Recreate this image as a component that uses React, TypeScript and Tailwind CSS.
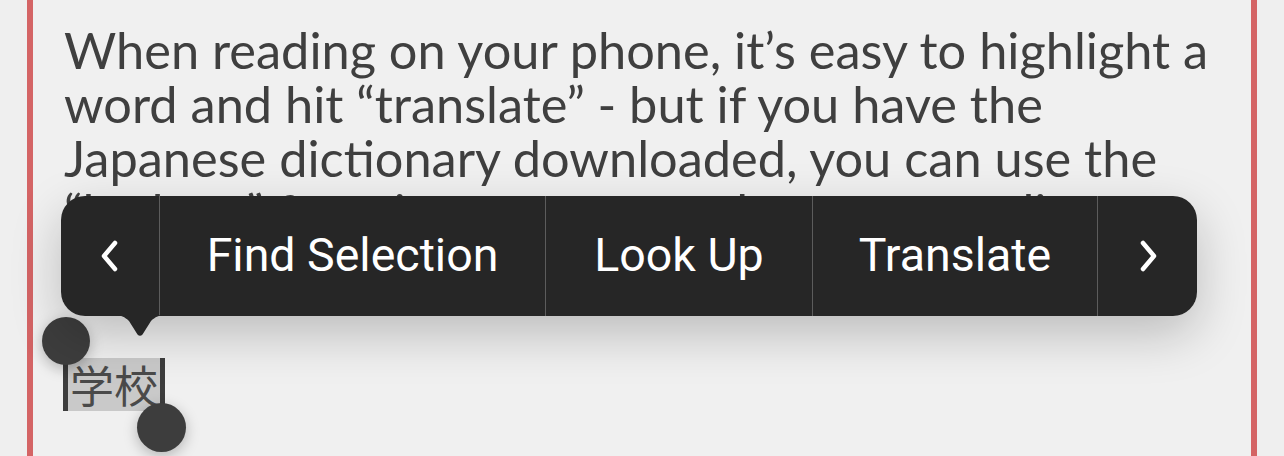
import React from "react";

const items = [
  { label: "Find Selection", width: "w-[386px]" },
  { label: "Look Up", width: "w-[267px]" },
  { label: "Translate", width: "w-[285px]" },
];

const Chevron = ({ dir }: { dir: "left" | "right" }) => (
  <svg width="22" height="34" viewBox="0 0 22 34" fill="none" stroke="white" strokeWidth="4.5" strokeLinecap="round" strokeLinejoin="round">
    {dir === "left" ? <path d="M16 4L5 17l11 13" /> : <path d="M6 4l11 13L6 30" />}
  </svg>
);

export default function App() {
  return (
    <div className="w-[1284px] h-[456px] overflow-hidden bg-[#efefef] pl-[27px]">
      <div className="relative w-[1230px] h-full border-l-[6px] border-r-[6px] border-[#d46465] bg-[#f0f0f0]">
        <div
          className="pl-[31px] pr-[10px] pt-[23px] text-[#3f3f3f] text-[50.5px] leading-[54px] whitespace-nowrap"
          style={{ fontFamily: "Lato, 'Noto Sans', sans-serif" }}
        >
          <p>
            When reading on your phone, it’s easy to highlight a<br />
            word and hit “translate” - but if you have the<br />
            Japanese dictionary downloaded, you can use the<br />
            “look up” function on any word you are reading.
          </p>
        </div>

        {/* selected word */}
        <div className="absolute left-[30px] top-[358px] flex items-start">
          <div className="w-[5px] h-[53px] bg-[#3d3d3d]" />
          <div
            className="bg-[#c9c9c9] px-[2px] text-[44px] leading-[53px] h-[53px] text-[#4a4a4a]"
            style={{ fontFamily: "'Noto Sans CJK JP', sans-serif" }}
          >
            学校
          </div>
          <div className="w-[5px] h-[47px] bg-[#3d3d3d]" />
        </div>
        <div className="absolute left-[9px] top-[317px] w-[48px] h-[48px] rounded-full bg-[#3d3d3d] shadow-[0_4px_14px_rgba(0,0,0,0.25)]" />
        <div className="absolute left-[104px] top-[403px] w-[49px] h-[49px] rounded-full bg-[#3d3d3d] shadow-[0_4px_14px_rgba(0,0,0,0.25)]" />

        {/* edit menu */}
        <div className="absolute left-[28px] top-[196px] shadow-[0_18px_50px_rgba(0,0,0,0.22)] rounded-[24px]">
          <div
            className="flex h-[120px] bg-[#262626] rounded-[24px] text-white text-[46.5px]"
            style={{ fontFamily: "Roboto, Inter, sans-serif" }}
          >
            <div className="w-[99px] flex items-center justify-center border-r border-[#5c5c5c]">
              <Chevron dir="left" />
            </div>
            {items.map((it) => (
              <div key={it.label} className={`${it.width} flex items-center justify-center border-r border-[#5c5c5c]`}>
                {it.label}
              </div>
            ))}
            <div className="w-[99px] flex items-center justify-center">
              <Chevron dir="right" />
            </div>
          </div>
          <svg className="absolute left-[52px] top-[119px]" width="54" height="22" viewBox="0 0 54 22">
            <path d="M0 0h54c-8 0-12 2-16 6L29.5 19.5a3.5 3.5 0 0 1-5 0L16 6C12 2 8 0 0 0z" fill="#262626" />
          </svg>
        </div>
      </div>
    </div>
  );
}
